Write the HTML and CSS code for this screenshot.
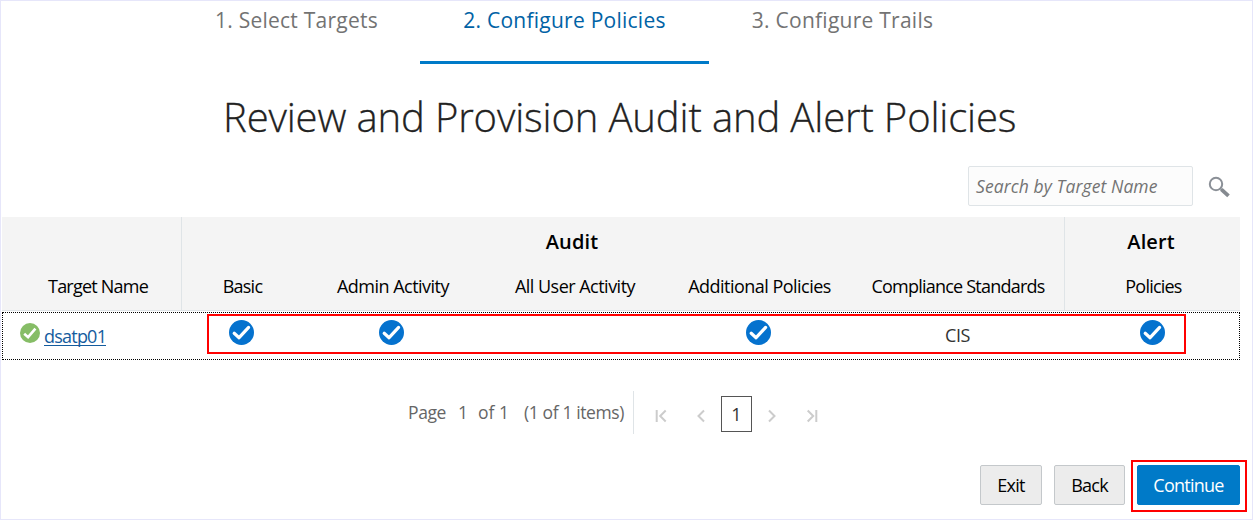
FILE: index.html
```html
<!DOCTYPE html>
<html lang="en">
<head>
<meta charset="utf-8">
<title>Review and Provision Audit and Alert Policies</title>
<link rel="stylesheet" href="styles.css">
</head>
<body>
<svg width="0" height="0" class="defs">
  <symbol id="check" viewBox="0 0 25 25">
    <circle cx="12.5" cy="12.5" r="12.5" fill="#0572ce"/>
    <path d="M5.2 13.3l4.9 4.4L19.6 7.4" fill="none" stroke="#fff" stroke-width="3.2" stroke-linecap="round" stroke-linejoin="round"/>
  </symbol>
</svg>
<main class="page">
  <nav class="steps">
    <a class="step first">1. Select Targets</a>
    <a class="step current">2. Configure Policies</a>
    <a class="step last">3. Configure Trails</a>
  </nav>
  <h1 class="title">Review and Provision Audit and Alert Policies</h1>
  <div class="search">
    <div class="field">Search by Target Name</div>
    <svg class="lens" width="22" height="22" viewBox="0 0 22 22">
      <circle cx="8" cy="8" r="6.2" fill="none" stroke="#8b9097" stroke-width="2"/>
      <path d="M12.2 12.2l2 2" stroke="#8b9097" stroke-width="1.6"/>
      <path d="M13.3 13.3l7.2 6.5" stroke="#858a90" stroke-width="3.8"/>
    </svg>
  </div>
  <section class="table">
    <div class="head">
      <div class="group"><div class="caption"></div><div class="cols target-head"><span class="tight">Target Name</span></div></div>
      <div class="group"><div class="caption audit">Audit</div>
        <div class="cols audit-cols">
          <span class="tight">Basic</span><span>Admin Activity</span><span>All User Activity</span><span>Additional Policies</span><span class="tight">Compliance Standards</span>
        </div>
      </div>
      <div class="group"><div class="caption alert">Alert</div><div class="cols policy-head"><span class="tight">Policies</span></div></div>
    </div>
    <div class="row">
      <div class="target">
        <svg width="20" height="20" viewBox="0 0 20 20"><circle cx="10" cy="10" r="10" fill="#86bd66"/><path d="M4.2 10.7l3.9 3.5 7.3-8.5" fill="none" stroke="#fff" stroke-width="2.6"/></svg>
        <a class="link">dsatp01</a>
      </div>
      <svg class="check"><use href="#check"/></svg>
      <svg class="check"><use href="#check"/></svg>
      <span></span>
      <svg class="check"><use href="#check"/></svg>
      <span class="cis">CIS</span>
      <svg class="check"><use href="#check"/></svg>
      <div class="callout row-callout"></div>
    </div>
  </section>
  <div class="pager">
    <div class="summary"><span class="page-label">Page</span><span class="page-no">1</span><span class="of">of 1</span><span class="items">(1 of 1 items)</span></div>
    <div class="controls">
      <svg class="arrow" width="14" height="14" viewBox="0 0 14 14"><path d="M1.7 1v12M10.7 1.5L5.2 7l5.5 5.5"/></svg>
      <svg class="arrow prev" width="14" height="14" viewBox="0 0 14 14"><path d="M10 1.5L4.5 7l5.5 5.5"/></svg>
      <span class="current-page">1</span>
      <svg class="arrow next" width="14" height="14" viewBox="0 0 14 14"><path d="M4 1.5L9.5 7 4 12.5"/></svg>
      <svg class="arrow" width="14" height="14" viewBox="0 0 14 14"><path d="M2.7 1.5L8.2 7l-5.5 5.5M11.3 1v12"/></svg>
    </div>
  </div>
  <footer class="actions">
    <button class="btn exit">Exit</button>
    <button class="btn back">Back</button>
    <div class="continue-wrap"><button class="btn primary">Continue</button><div class="callout continue-callout"></div></div>
  </footer>
</main>
</body>
</html>
```
FILE: styles.css
```css
* { box-sizing: border-box; }
body { margin: 0; background: #fff; font-family: "Open Sans", "Noto Sans", sans-serif; font-size: 18px; color: #000; }
span { white-space: nowrap; }
.defs { position: absolute; }
.page { width: 1253px; height: 520px; border: 1px solid #e6e6fa; overflow: hidden; display: flex; flex-direction: column; }

.steps { display: flex; height: 63px; padding-left: 172px; color: #737373; font-size: 21px; line-height: 38px; letter-spacing: 0.25px; }
.step { text-align: center; }
.step.first { width: 247px; }
.step.current { width: 289px; color: #0062a5; border-bottom: 3px solid #007ac8; }
.step.last { width: 267px; }

.title { margin: 0; height: 102px; padding-left: 222px; font-size: 40px; font-weight: 300; line-height: 106px; letter-spacing: -0.14px; color: #222; -webkit-text-stroke: 0.3px #222; }

.search { display: flex; height: 40px; padding-left: 967px; gap: 15px; }
.field { width: 225px; height: 40px; border: 1px solid #dfe4e7; border-radius: 2px; background: #fcfcfc; padding-left: 7px; color: #737373; font-size: 17.5px; font-style: italic; line-height: 39px; letter-spacing: 0.1px; }
.lens { margin-top: 10px; }

.table { margin: 11px 0 0 1px; width: 1238px; }
.head { display: grid; grid-template-columns: 180px 883px 175px; height: 94px; background: #f4f4f4; border-bottom: 1px solid #dfe4e7; }
.group { text-align: center; }
.group + .group { margin-left: -1px; box-shadow: inset 1px 0 #dfe4e7; }
.caption { height: 49px; line-height: 49px; font-size: 20px; font-weight: 600; }
.audit { padding-right: 102px; letter-spacing: 0.15px; }
.alert { padding-right: 2px; letter-spacing: 0.1px; }
.cols { display: grid; line-height: 41px; letter-spacing: -0.52px; }
.tight { letter-spacing: -0.78px; }
.target-head { padding-left: 12px; }
.policy-head { padding-left: 3px; }
.audit-cols { grid-template-columns: 123px 178px 186px 183px 214px; }
.row { position: relative; display: grid; grid-template-columns: 179px 118px 182px 186px 181px 217px 1fr; justify-items: center; width: 1238px; height: 48px; margin-top: 1px; border: 1px dotted #000; }
.target { justify-self: start; display: flex; gap: 4px; padding: 10px 0 0 17px; }
.link { height: 23px; border-bottom: 1px solid #145c9e; color: #145c9e; line-height: 27px; letter-spacing: -0.78px; }
.check { width: 25px; height: 25px; margin-top: 7px; }
.cis { line-height: 45px; color: #333; letter-spacing: -0.4px; }
.callout { position: absolute; border: 2px solid #f00; }
.row-callout { left: 204px; top: 1px; width: 979px; height: 40px; }

.pager { display: flex; height: 43px; margin-top: 31px; padding-left: 407px; color: #666; line-height: 43px; }
.summary { display: flex; width: 226px; border-right: 1px solid #dfe4e7; font-size: 17.5px; }
.page-label { width: 50px; letter-spacing: -0.4px; }
.page-no { width: 20px; }
.of { width: 46px; }
.items { letter-spacing: -0.38px; }
.controls { display: flex; align-items: center; padding: 6px 0 0 21px; }
.arrow { fill: none; stroke: #ccc; stroke-width: 2; }
.prev { margin: 0 13px 0 25px; }
.next { margin: 0 26px 0 13px; }
.current-page { width: 31px; height: 36px; margin-top: -4px; border: 1px solid #555; text-align: center; line-height: 35px; color: #333; }

.actions { display: flex; margin-top: 31px; padding-left: 979px; gap: 12px; }
.btn { height: 40px; padding: 0; border: 1px solid #c4c8cb; border-radius: 2px; background: #ececec; font: inherit; letter-spacing: -0.75px; color: #000; }
.exit { width: 62px; }
.back { width: 71px; }
.continue-wrap { position: relative; }
.primary { width: 103px; border-color: #007ac8; background: #007ac8; color: #fff; }
.continue-callout { left: -6px; top: -5px; width: 116px; height: 52px; }
```
